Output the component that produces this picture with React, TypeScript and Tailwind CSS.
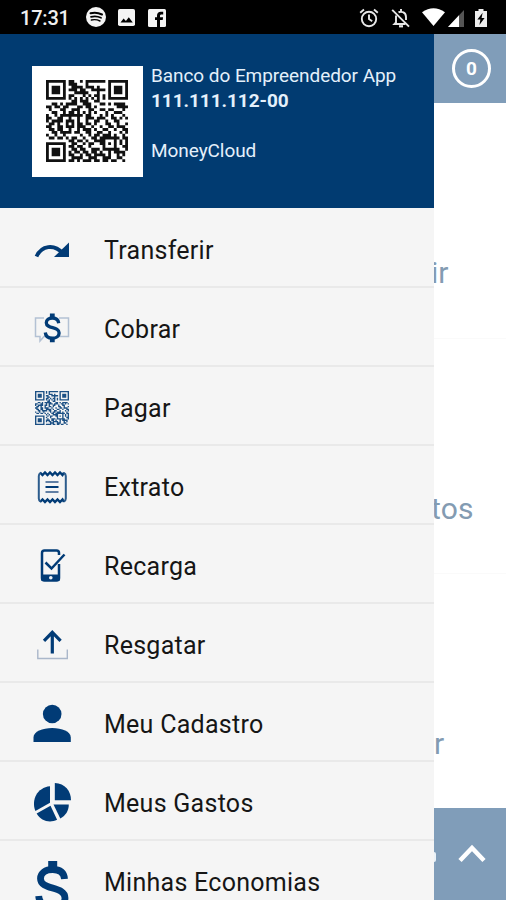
import React from "react";

const NAVY = "#013b76";

const QR_ROWS = [
  "11111110110010111111101111111",
  "10000010111000100000001000001",
  "10111010011110111010001011101",
  "10111010111011001111101011101",
  "10111010001111100010001011101",
  "10000010110001010110101000001",
  "11111110101010101010101111111",
  "00000000011011100110000000000",
  "00110101111001110001101011110",
  "11011011000110110100000001111",
  "01000110011100011001101100010",
  "00110010110101010100010011100",
  "10010111111110110001010100010",
  "11001100100100111011100110101",
  "10111101110100100110010011000",
  "01101001010110110100011001001",
  "11001101110111001001001101110",
  "01101100100101110100110010011",
  "00110111101100110011001000101",
  "10010010000010010110111010010",
  "01101101011001001101111111011",
  "00000000110110100111100010101",
  "11111110011001011001101010101",
  "10000010110110010000100010011",
  "10111010011011001110111111001",
  "10111010101101101101001011110",
  "10111010110010110111101001010",
  "10000010011110011100111001100",
  "11111110110101110110110110010",
];

// The menu glyph is a smaller code: the middle rows and columns are left out.
const SMALL_QR_ROWS = QR_ROWS.filter((_, i) => i < 9 || i > 12).map(
  (row) => row.slice(0, 9) + row.slice(13)
);

function QrCode({ rows, className, color }: { rows: string[]; className: string; color: string }) {
  const n = rows.length;
  const d = rows
    .map((row, y) => [...row].map((c, x) => (c === "1" ? `M${x} ${y}h1v1h-1z` : "")).join(""))
    .join("");
  return (
    <svg viewBox={`0 0 ${n} ${n}`} className={className}>
      <path d={d} fill={color} />
    </svg>
  );
}

function StatusBar() {
  return (
    <div className="flex h-[34px] shrink-0 items-center bg-black pl-[20px] text-[#f0f0f0]">
      <span className="w-[66px] pt-[2px] text-[20px] leading-none font-medium tracking-[-0.2px]">17:31</span>
      <svg width="20" height="20" viewBox="0 0 20 20">
        <circle cx="10" cy="10" r="10" fill="#f4f4f4" />
        <g fill="none" stroke="#000" strokeLinecap="round">
          <path d="M4.5 6.3q6-1.500 11.500 1.200" strokeWidth="2" />
          <path d="M5 9.800q5.500-1.300 10 1" strokeWidth="1.700" />
          <path d="M5.400 13q4.600-1 8.600 1" strokeWidth="1.400" />
        </g>
      </svg>
      <svg width="17" height="17" viewBox="0 0 17 17" className="ml-3">
        <rect width="17" height="17" rx="1.8" fill="#f4f4f4" />
        <path d="M2.500 13.500 5.600 9.500l2.300 2.600 2.900-3.800 4 5.200z" fill="#000" />
      </svg>
      <svg width="18" height="18" viewBox="0 0 18 18" className="ml-[13px] mt-px">
        <rect width="18" height="18" rx="1.5" fill="#f4f4f4" />
        <path d="M9 18v-7H7V8.200h2V6.500C9 4 10.500 2.700 12.800 2.700h2.400v2.800h-1.600c-1.200 0-1.600.5-1.600 1.500v1.200h3.100L14.700 11H12v7z" fill="#000" />
      </svg>
      <svg width="20" height="20" viewBox="0 0 20 20" className="ml-[193px] mt-px" fill="none" stroke="#e8e8e8" strokeWidth="1.9">
        <circle cx="10" cy="11" r="7.2" />
        <path d="M10 6.500V11l3.200 2.200M1.200 4.800 5 1.600M18.800 4.800 15 1.600" />
      </svg>
      <svg width="20" height="20" viewBox="0 0 20 20" className="ml-3 mt-px" fill="none" stroke="#e8e8e8" strokeWidth="1.9">
        <path d="M7.500 4.400C9 3.500 15 3 15 9v3M5 7.500V14.500L3.500 16H14.500M10 1v3" />
        <path d="M1.200 1.800 18 18.600" />
        <path d="M8 18.300h4" strokeWidth="2.2" />
      </svg>
      <svg width="23" height="18" viewBox="0 0 23 18" className="ml-[11px]">
        <path d="M0 4.200Q11.500-3.800 23 4.200L11.500 18z" fill="#fff" />
      </svg>
      <svg width="16" height="17" viewBox="0 0 16 17" className="ml-[3px] mt-[2px]">
        <path d="M16 0v17H0z" fill="#555" />
        <path d="M11 5.300V17H0z" fill="#fff" />
      </svg>
      <svg width="12" height="18" viewBox="0 0 12 18" className="ml-[11px] mt-[2px]">
        <path d="M3.500 0h5v2H12v16H0V2h3.500z" fill="#ededed" />
        <path d="M7.600 3.800 2.400 10.500h3L4.400 16l5.200-7H6.600z" fill="#000" />
      </svg>
    </div>
  );
}

const icons: Record<string, React.ReactNode> = {
  transfer: (
    <>
      <path d="M4.500 26.500C9.500 15.500 22 13.500 31 23.500" fill="none" stroke={NAVY} strokeWidth="3.8" />
      <path d="M37 12.500V27H22z" fill={NAVY} />
    </>
  ),
  charge: (
    <>
      <path d="M12 9H3.500v18.500H8v4.500l4-4.500h3M27 9h9.500v18.500H27" fill="none" stroke="#b3c1d4" strokeWidth="1.5" />
      <path d="M26.700 14.200c-.4-3.600-2.800-5.200-6.300-5.200-3.700 0-6.100 1.800-6.100 4.700 0 6.600 12.800 3.400 12.800 10.200 0 3.300-2.700 5.300-6.700 5.300-4.200 0-6.800-2-7.100-5.700" fill="none" stroke={NAVY} strokeWidth="3.300" />
      <path d="M20.300 4.500v4.500M20.300 29v4.300" stroke={NAVY} strokeWidth="4.800" />
    </>
  ),
  receipt: (
    <>
      <path d="M8 5.500l2.500 2.500L13 5.500l2.500 2.500L18 5.500l2.500 2.500L23 5.500l2.500 2.500L28 5.500l2.500 2.500L32 5.500" fill="none" stroke={NAVY} strokeWidth="2.400" />
      <path d="M8 35l2.500-2.500L13 35l2.500-2.500L18 35l2.500-2.500L23 35l2.500-2.500L28 35l2.500-2.500L32 35" fill="none" stroke={NAVY} strokeWidth="2.400" />
      <path d="M8.500 6Q6.800 7 6.800 9v22.500Q6.800 33.500 8.500 34.500M31.800 6Q33.800 7 33.800 9v22.500Q33.800 33.500 31.800 34.500" fill="none" stroke="#2c5c8d" strokeWidth="2" />
      <path d="M13.500 15h13M13.500 25h13" stroke="#617fa4" strokeWidth="1.800" />
      <path d="M13.500 20h13" stroke={NAVY} strokeWidth="2" />
    </>
  ),
  phone: (
    <>
      <path d="M27 9V7Q27 4.500 24.500 4.500H12.500Q10 4.500 10 7V32Q10 34.500 12.500 34.500H24.500Q27 34.500 27 32V18" fill="none" stroke={NAVY} strokeWidth="2.500" />
      <path d="M9 28.500h19v6H9z" fill={NAVY} />
      <circle cx="18.800" cy="31.800" r="1.800" fill="#eef2f7" />
      <path d="m13.500 16.500 6 6L32.500 8.500" fill="none" stroke={NAVY} strokeWidth="2.500" />
    </>
  ),
  upload: (
    <>
      <path d="M5.800 24.500v9h29.500v-9" fill="none" stroke="#aab7ca" strokeWidth="1.400" />
      <path d="M20.300 28.500V7.500M12 15.800l8.300-8.500 8.300 8.500" fill="none" stroke={NAVY} strokeWidth="3.200" />
    </>
  ),
  person: (
    <>
      <circle cx="20.200" cy="10" r="9.300" fill={NAVY} />
      <path d="M1.500 38v-4.500c0-6 9-9.500 18.700-9.500s18.600 3.500 18.600 9.500v4.500z" fill={NAVY} />
    </>
  ),
  pie: (
    <g fill={NAVY}>
      <path d="M18 3.200V19.800L3.400 28C-1 17 5 4.500 18 3.200z" />
      <path d="M22.800 0C33 .5 39 8 39 17.200H22.800z" />
      <path d="M4.600 30.500 18.500 22.800l6.600 14C17.500 40.500 9 38 4.600 30.500z" />
      <path d="M21.500 21.500h15.300c0 6-3 11-8.500 14z" />
    </g>
  ),
  dollar: (
    <g fill="none" stroke={NAVY}>
      <path d="M32.500 17C32 10 27.500 7.500 20.700 7.500 13.500 7.500 8.500 11 8.500 16.500 8.500 28.500 33 23.500 33 36c0 6-5.500 9-12.300 9C13 45 7.200 41.500 6.700 34" strokeWidth="6.800" />
      <path d="M20.700-1v8M20.700 43v9" strokeWidth="9" />
    </g>
  ),
};

const items = [
  { icon: "transfer", label: "Transferir" },
  { icon: "charge", label: "Cobrar" },
  { icon: "qr", label: "Pagar" },
  { icon: "receipt", label: "Extrato" },
  { icon: "phone", label: "Recarga" },
  { icon: "upload", label: "Resgatar" },
  { icon: "person", label: "Meu Cadastro" },
  { icon: "pie", label: "Meus Gastos" },
  { icon: "dollar", label: "Minhas Economias" },
];

function MenuIcon({ name }: { name: string }) {
  if (name === "qr")
    return (
      <div className="flex size-10 items-center justify-center">
        <QrCode rows={SMALL_QR_ROWS} className="size-[34px]" color="#1c5084" />
      </div>
    );
  return (
    <svg width="40" height="40" viewBox="0 0 40 40" className="overflow-visible">
      {icons[name]}
    </svg>
  );
}

function Drawer() {
  return (
    <aside className="flex w-[434px] shrink-0 flex-col overflow-hidden bg-[#f5f5f5]">
      <header className="flex h-[174px] shrink-0 bg-[#013b71] pt-8 pl-8 text-[#e4f0fb]">
        <div className="flex size-[111px] items-center justify-center bg-white pr-px pb-[2px]">
          <QrCode rows={QR_ROWS} className="size-[82px]" color="#111" />
        </div>
        <div className="-mt-[3px] ml-2 text-[19px] leading-[25px] tracking-[-0.06px] whitespace-nowrap">
          <p>Banco do Empreendedor App</p>
          <p className="font-bold">111.111.112-00</p>
          <p className="mt-[25px]">MoneyCloud</p>
        </div>
      </header>
      <nav className="pt-px">
        {items.map((it) => (
          <div key={it.icon} className="flex h-[79px] items-center border-b-2 border-[#e9e9e9] pt-[5px] pl-8">
            <MenuIcon name={it.icon} />
            <span className="ml-8 text-[25px] leading-none tracking-[0.27px] whitespace-nowrap text-[#161616]">{it.label}</span>
          </div>
        ))}
      </nav>
    </aside>
  );
}

function Underlay() {
  return (
    <main className="flex min-w-0 flex-1 flex-col overflow-hidden bg-white text-[30px] leading-none text-[#839bb2]">
      <div className="flex h-[69px] shrink-0 items-center bg-[#809db9] pl-[18px]">
        <div className="flex size-[39px] items-center justify-center rounded-full border-[3px] border-white text-[19px] font-bold text-white">0</div>
      </div>
      <div className="h-[236px] shrink-0 border-b border-[#fafafa] pt-[155px]">
        <span className="-ml-[3px]">ir</span>
      </div>
      <div className="h-[235px] shrink-0 border-b border-[#fafafa] pt-[155px]">
        <span className="-ml-[3px] tracking-[0.2px]">tos</span>
      </div>
      <div className="h-[234px] shrink-0 pt-[155px]">
        <span>r</span>
      </div>
      <div className="flex flex-1 items-start bg-[#809db9] pt-[36px]">
        <div className="mt-[8px] h-[10px] w-[2px] rounded-r-full bg-[#eaf2f8]" />
        <svg width="28" height="20" viewBox="0 0 28 20" className="ml-[22px]">
          <path d="M2 16.500 14 4l12 12.500" fill="none" stroke="#fff" strokeWidth="4.500" />
        </svg>
      </div>
    </main>
  );
}

export default function App() {
  return (
    <div className="flex h-[900px] w-[506px] flex-col overflow-hidden bg-white font-[Roboto,sans-serif]">
      <StatusBar />
      <div className="flex min-h-0 flex-1">
        <Drawer />
        <Underlay />
      </div>
    </div>
  );
}
